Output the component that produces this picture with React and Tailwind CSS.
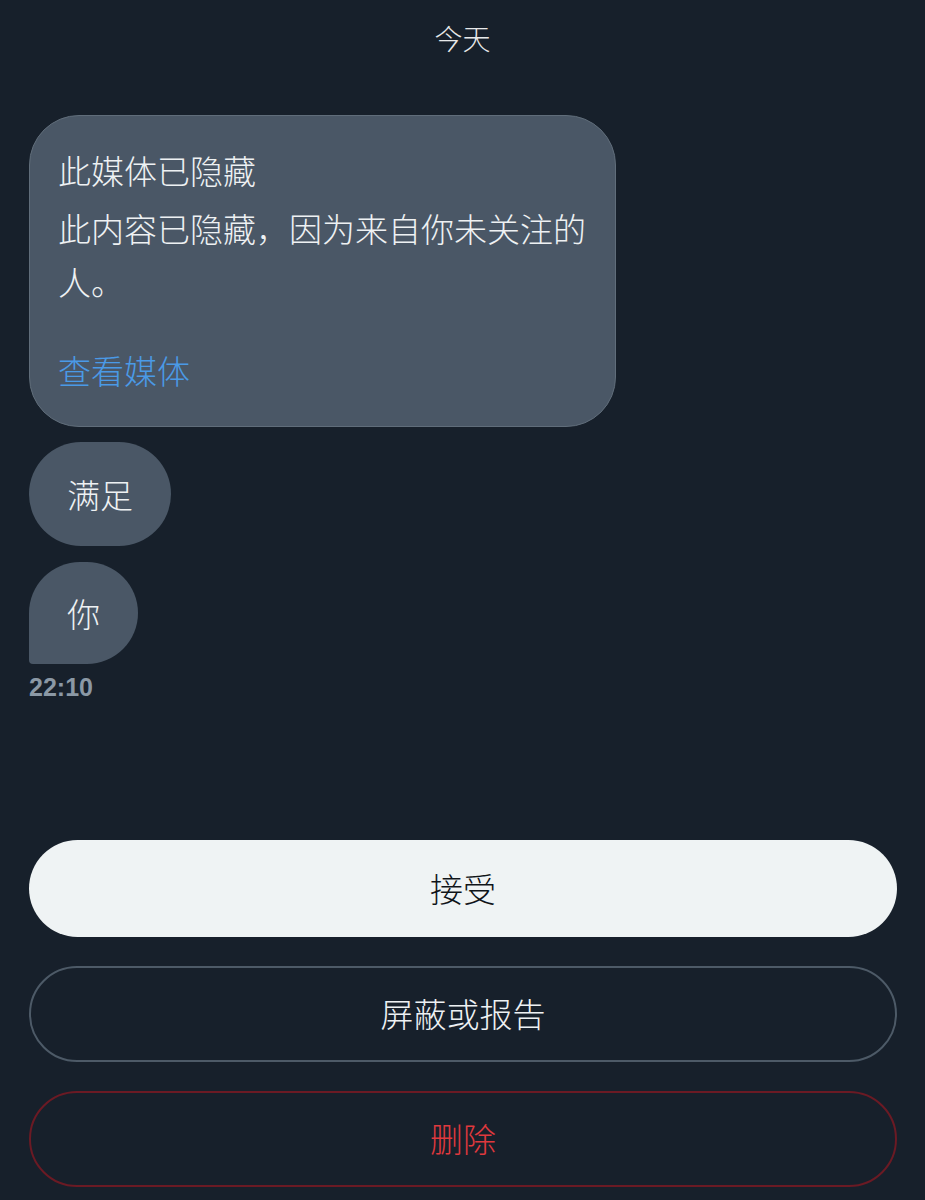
import React from 'react'

const font = { fontFamily: '"Noto Sans CJK SC", "Noto Sans", sans-serif' }

const Bubble = ({ children, className = '' }) => (
  <div className={`self-start bg-[#4a5766] text-[#eef1f3] text-[33px] leading-[40px] ${className}`}>
    {children}
  </div>
)

const App = () => {
  return (
    <div className="min-h-[1200px] w-[925px] bg-[#17202b] flex flex-col font-light" style={font}>
      <div className="pt-[18px] text-center text-[28px] leading-[40px] text-[#e7e9ea]">今天</div>

      <div className="flex flex-col px-[29px] mt-[57px]">
        {/* hidden media card */}
        <div className="w-[587px] rounded-[50px] border-[1.5px] border-[#606d7a] bg-[#4a5766] pl-[28px] pr-[26px] pt-[28px] pb-[29px] text-[33px] leading-[53px] text-[#eef1f3]">
          <p className="mb-[6px]">此媒体已隐藏</p>
          <p className="-mt-[1px]">此内容已隐藏，因为来自你未关注的人。</p>
          <p className="mt-[36px] text-[#4a9ae6]">查看媒体</p>
        </div>

        <Bubble className="mt-[15px] rounded-[52px] px-[38px] py-[32px]">满足</Bubble>
        <Bubble className="mt-[16px] rounded-[52px] rounded-bl-[4px] px-[38px] py-[31px]">你</Bubble>

        <div className="mt-[8px] text-[25px] leading-[30px] font-bold text-[#8b98a5]" style={{ fontFamily: '"Liberation Sans", Arial, sans-serif' }}>
          22:10
        </div>
      </div>

      <div className="flex flex-col gap-[29px] pr-[28px] pl-[29px] mt-[138px]">
        <button className="h-[97px] w-full rounded-full bg-[#eff3f4] text-[33px] font-light text-[#0f1419]">接受</button>
        <button className="h-[96px] w-full rounded-full border-2 border-[#4d5a67] text-[33px] font-light text-[#eef1f3]">屏蔽或报告</button>
        <button className="h-[96px] w-full rounded-full border-2 border-[#6b1a24] text-[33px] font-light text-[#e0393e]">删除</button>
      </div>
    </div>
  )
}

export default App
